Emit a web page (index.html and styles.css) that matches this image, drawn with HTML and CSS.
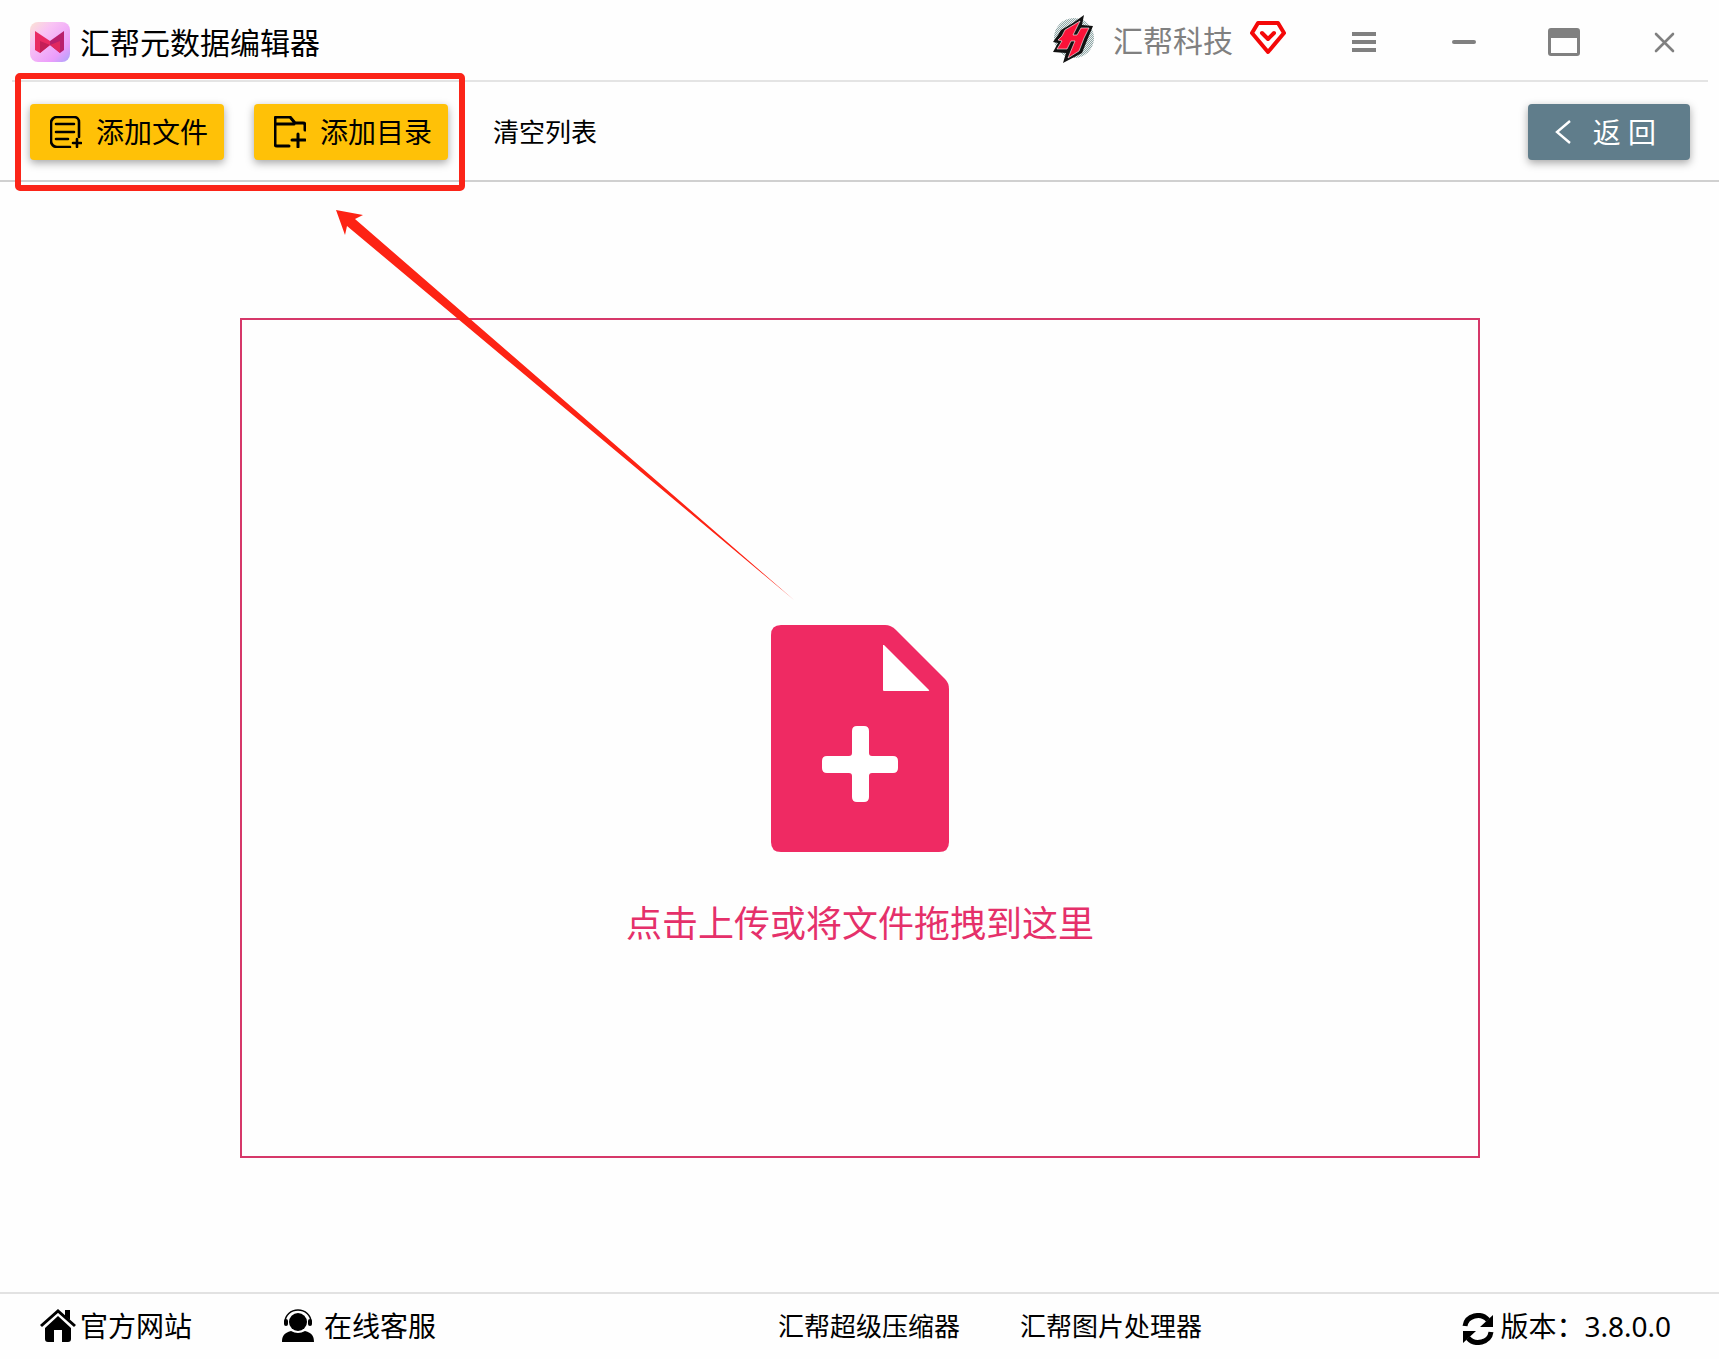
FILE: index.html
```html
<!DOCTYPE html>
<html lang="zh-CN">
<head>
<meta charset="utf-8">
<title>汇帮元数据编辑器</title>
<link rel="stylesheet" href="styles.css">
</head>
<body>
<div class="app">
  <header class="titlebar">
    <svg class="logo" viewBox="0 0 40 40" aria-hidden="true">
      <defs>
        <linearGradient id="logo-bg" x1="0" y1="0" x2="1" y2="1">
          <stop offset="0" stop-color="#fbe3d3"/>
          <stop offset=".3" stop-color="#f9c4f4"/>
          <stop offset=".75" stop-color="#eb9dfb"/>
          <stop offset="1" stop-color="#a9a4fb"/>
        </linearGradient>
      </defs>
      <rect width="40" height="40" rx="8" fill="url(#logo-bg)"/>
      <path d="M5 9l15 10v4L10 31l-5-3z" fill="#e92a63"/>
      <path d="M34 9L20 19v4l10 8 4-3z" fill="#b81f6c"/>
      <path d="M10 19l10 4-10 8z" fill="#c41f58"/>
      <path d="M30 19l-10 4 10 8z" fill="#e0285f"/>
    </svg>
    <h1 class="title">汇帮元数据编辑器</h1>
    <div class="account">
      <svg class="avatar" viewBox="0 0 42 50" aria-hidden="true">
        <defs>
          <pattern id="dots" width="2" height="2" patternUnits="userSpaceOnUse">
            <rect width="2" height="2" fill="#e8eeee"/>
            <rect width="1" height="1" fill="#8fa5a5"/>
            <rect x="1" y="1" width="1" height="1" fill="#8fa5a5"/>
          </pattern>
        </defs>
        <circle cx="21" cy="24" r="20" fill="url(#dots)"/>
        <path d="M31 1l-2 10 11 1-5 12-6 15-19 10 3-10-13-1 5-9-5-1 5-7 3-5 12-7z" fill="#111"/>
        <path d="M27 7L12 16l-3 6-4 4 4 1-5 8h10l4-8h4l-7 17 11-7 5-13 5-10h-8l-4 7h-4z" fill="#fb1238" stroke="#fff" stroke-width=".6"/>
      </svg>
      <span class="account-name">汇帮科技</span>
      <svg class="vip" viewBox="0 0 36 36" aria-hidden="true" fill="none" stroke="#f40808" stroke-linejoin="round" stroke-linecap="round">
        <path d="M8 3h20l6 10-16 19L2 13z" stroke-width="4"/>
        <path d="M12 13l6 6 6-6" stroke-width="4"/>
      </svg>
    </div>
    <div class="window-controls">
      <button class="window-button" type="button" aria-label="菜单"><svg width="32" height="32" viewBox="0 0 32 32"><path d="M4 8h24M4 16h24M4 24h24" stroke="#808080" stroke-width="4"/></svg></button>
      <button class="window-button" type="button" aria-label="最小化"><svg width="32" height="32" viewBox="0 0 32 32"><path d="M6 16h20" stroke="#808080" stroke-width="4" stroke-linecap="round"/></svg></button>
      <button class="window-button" type="button" aria-label="最大化"><svg width="32" height="32" viewBox="0 0 32 32"><path fill-rule="evenodd" d="M3 2h26a3 3 0 0 1 3 3v22a3 3 0 0 1-3 3H3a3 3 0 0 1-3-3V5a3 3 0 0 1 3-3zM3 12v15h26V12z" fill="#808080"/></svg></button>
      <button class="window-button" type="button" aria-label="关闭"><svg width="32" height="32" viewBox="0 0 32 32"><path d="M8 8l17 17M25 8L8 25" stroke="#808080" stroke-width="2.6" stroke-linecap="round"/></svg></button>
    </div>
  </header>

  <div class="toolbar">
    <button class="button button-add" type="button">
      <svg width="32" height="32" viewBox="0 0 32 32" fill="none" stroke="#000" stroke-width="2.6" stroke-linecap="round"><path d="M20 31H7a6 6 0 0 1-6-6V7a6 6 0 0 1 6-6h17a5 5 0 0 1 5 5v15M6 8h18M6 16h18M6 23h12"/><path d="M27 23v8M23 27h8"/></svg>
      添加文件
    </button>
    <button class="button button-add" type="button">
      <svg width="32" height="32" viewBox="0 0 32 32" fill="none" stroke="#000" stroke-width="3" stroke-linecap="round" stroke-linejoin="round"><path d="M15 30H3a2 2 0 0 1-2-2V3a2 2 0 0 1 2-2h13l5 6h8a2 2 0 0 1 2 2v5M2 8h18"/><path d="M24 18v13M18 24h13"/></svg>
      添加目录
    </button>
    <button class="button-clear" type="button">清空列表</button>
    <button class="button button-back" type="button">
      <svg width="18" height="26" viewBox="0 0 18 26"><path d="M16 2L3 13l13 11" fill="none" stroke="#fff" stroke-width="2.4"/></svg>
      返 回
    </button>
  </div>

  <main class="workspace">
    <button class="dropzone" type="button">
      <svg class="file-icon" viewBox="0 0 178 227" aria-hidden="true">
        <path d="M10 0h104q6 0 11 5l49 49q4 4 4 10v153q0 10-10 10H10q-10 0-10-10V10Q0 0 10 0z" fill="#ef2a63"/>
        <path d="M112 20v45q0 1 1 1h44q2 0 1-1L113 20z" fill="#fff"/>
        <path d="M86 101h7q5 0 5 5v22q0 3 3 3h21q5 0 5 5v7q0 5-5 5h-21q-3 0-3 3v21q0 5-5 5h-7q-5 0-5-5v-21q0-3-3-3H56q-5 0-5-5v-7q0-5 5-5h22q3 0 3-3v-22q0-5 5-5z" fill="#fff"/>
      </svg>
      <span class="drop-text">点击上传或将文件拖拽到这里</span>
    </button>
  </main>

  <footer class="statusbar">
    <nav class="status-group">
      <a class="status-link status-home" href="#">
        <svg width="36" height="34" viewBox="0 0 36 34"><path d="M1 17L18 2l17 15" fill="none" stroke="#000" stroke-width="3"/><path d="M25 1h5v10l-5-4z"/><path d="M18 7l13 12v11q0 3-3 3h-6V21h-8v12H8q-3 0-3-3V19z"/></svg>
        官方网站
      </a>
      <a class="status-link status-service" href="#">
        <svg width="32" height="34" viewBox="0 0 32 34"><circle cx="16" cy="13" r="9"/><path d="M3 13a13 12 0 0 1 26 0" fill="none" stroke="#000" stroke-width="1.5"/><rect x="2" y="10" width="4" height="7" rx="2"/><rect x="26" y="10" width="4" height="7" rx="2"/><path d="M0 33c0-6 2-9 9-11q7 4 14 0c7 2 9 5 9 11z"/></svg>
        在线客服
      </a>
    </nav>
    <nav class="product-links">
      <a href="#">汇帮超级压缩器</a>
      <a href="#">汇帮图片处理器</a>
    </nav>
    <div class="version">
      <svg width="32" height="32" viewBox="0 0 32 32"><path d="M3 13a13 12 0 0 1 23-6M29 19a13 12 0 0 1-23 6" fill="none" stroke="#000" stroke-width="5"/><path d="M31 2v12H18zM1 30V18h13z"/></svg>
      <span>版本：3.8.0.0</span>
    </div>
  </footer>

  <div class="highlight"></div>
  <svg class="pointer" width="460" height="392" viewBox="0 0 460 392" aria-hidden="true"><path d="M0 0l27 5-8 4 439 381L11 16l-2 9z" fill="#fd2314"/></svg>
</div>
</body>
</html>
```
FILE: styles.css
```css
* {
  box-sizing: border-box;
}

body {
  margin: 0;
  background: #fefefe;
  color: #000;
  font-family: "Noto Sans", "Noto Sans CJK SC", sans-serif;
}

button {
  padding: 0;
  border: 0;
  background: none;
  color: inherit;
  font: inherit;
  cursor: pointer;
}

a {
  color: inherit;
  text-decoration: none;
}

svg {
  flex: none;
}

.app {
  position: relative;
  display: flex;
  flex-direction: column;
  min-height: 100vh;
}

.titlebar {
  display: flex;
  align-items: center;
  height: 82px;
  margin: 0 11px 0 12px;
  padding-left: 18px;
  border-bottom: 2px solid #e4e4e4;
}

.logo {
  width: 40px;
  height: 40px;
  margin-top: 4px;
}

.title {
  margin: 6px 0 0 10px;
  font-size: 30px;
  font-weight: 400;
  line-height: 40px;
}

.account {
  display: flex;
  align-items: center;
  margin-left: auto;
}

.avatar {
  width: 42px;
  height: 50px;
  margin: 0 18px 2px 0;
}

.account-name {
  padding-top: 2px;
  color: #808080;
  font-size: 30px;
  line-height: 40px;
}

.vip {
  width: 36px;
  height: 36px;
  margin: 0 28px 4px 17px;
}

.window-controls {
  display: flex;
  margin: 4px -6px 0 0;
}

.window-button {
  display: flex;
  align-items: center;
  justify-content: center;
  width: 100px;
  height: 60px;
}

.toolbar {
  display: flex;
  align-items: center;
  gap: 30px;
  height: 100px;
  padding: 2px 29px 0 30px;
  border-bottom: 2px solid #d0d0d0;
}

.button {
  display: flex;
  align-items: center;
  height: 56px;
  border-radius: 4px;
  box-shadow: 0 3px 8px rgba(0, 0, 0, 0.35);
  font-size: 28px;
  line-height: 40px;
}

.button-add {
  gap: 14px;
  padding: 0 16px 0 20px;
  background: #ffc107;
}

.button-clear {
  margin-left: 15px;
  font-size: 26px;
  line-height: 40px;
}

.button-back {
  gap: 21px;
  margin-left: auto;
  padding: 0 34px 0 26px;
  background: #607d8b;
  color: #fff;
}

.workspace {
  display: flex;
  flex: 1;
  padding: 136px 239px 134px 240px;
}

.dropzone {
  display: flex;
  flex: 1;
  flex-direction: column;
  align-items: center;
  justify-content: center;
  gap: 46px;
  padding-top: 98px;
  border: 2px solid #d63869;
  color: #e5306a;
}

.file-icon {
  width: 178px;
  height: 227px;
}

.drop-text {
  font-size: 36px;
  line-height: 52px;
}

.statusbar {
  display: grid;
  grid-template-columns: 738fr auto 469fr;
  align-items: center;
  height: 67px;
  padding: 0 48px 2px 40px;
  border-top: 2px solid #e2e2e2;
  font-size: 28px;
  line-height: 40px;
}

.status-group,
.status-link,
.product-links,
.version {
  display: flex;
  align-items: center;
}

.status-group {
  gap: 90px;
}

.status-home {
  gap: 4px;
}

.status-service {
  gap: 10px;
}

.product-links {
  gap: 60px;
  font-size: 26px;
}

.version {
  justify-content: flex-end;
  gap: 6px;
}

.version svg {
  margin-top: 6px;
}

.highlight {
  position: absolute;
  top: 73px;
  left: 15px;
  width: 450px;
  height: 118px;
  border: 6px solid #fb2418;
  border-radius: 5px;
  pointer-events: none;
}

.pointer {
  position: absolute;
  top: 210px;
  left: 336px;
  pointer-events: none;
}
```
